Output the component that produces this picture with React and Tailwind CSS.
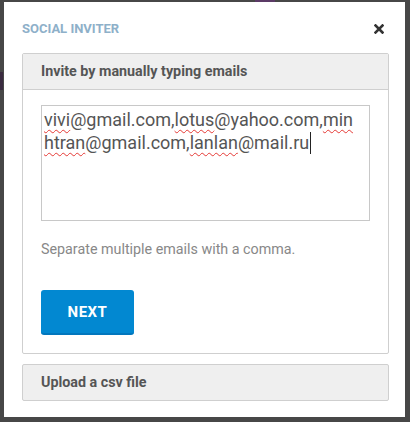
import { useState } from 'react'

const Misspelled = ({ children }) => (
  <span className="underline decoration-wavy decoration-[#e53935] decoration-1 underline-offset-[3px]">{children}</span>
)

export default function App() {
  const [open] = useState(true)
  if (!open) return null

  return (
    <div
      className="w-[410px] h-[422px] bg-[#474747] pt-[2px] pl-[4px] pr-[5px] pb-[5px] relative"
      style={{ fontFamily: 'Roboto, "Liberation Sans", sans-serif' }}
    >
      {/* backdrop bits peeking from behind */}
      <div className="absolute left-[255px] top-0 w-[20px] h-[2px] bg-[#5b3a66]" />
      <div className="absolute left-0 top-[72px] w-[3px] h-[18px] bg-[#3a2b40]" />

      <div className="bg-white h-full flex flex-col">
        {/* Title */}
        <div className="h-[51px] flex items-center justify-between pl-[18px] pr-[21px]">
          <h2 className="text-[13px] font-bold text-[#8eb0c9] uppercase mt-[2px]">Social inviter</h2>
          <button className="mt-[2px]">
            <svg width="10" height="10" viewBox="0 0 10 10">
              <path d="M1.5 1.5 L8.5 8.5 M8.5 1.5 L1.5 8.5" stroke="#333" strokeWidth="2.6" strokeLinecap="square" />
            </svg>
          </button>
        </div>

        {/* Manual entry */}
        <div className="ml-[18px] mr-[16px] border border-[#cfcfcf] rounded-[2px]">
          <div className="h-[36px] bg-[#efefef] border-b border-[#cfcfcf] flex items-center px-[18px]">
            <span className="text-[14.3px] font-bold text-[#555]">Invite by manually typing emails</span>
          </div>
          <div className="px-[18px] pt-[15px] pb-[18px]">
            <div className="h-[116px] border border-[#c8c8c8] px-[2px] pt-[2px] text-[18px] leading-[23px] text-[#555]">
              <div>
                <Misspelled>vivi</Misspelled>@gmail.com,<Misspelled>lotus</Misspelled>@yahoo.com,<Misspelled>min</Misspelled>
              </div>
              <div className="flex items-center">
                <span>
                  <Misspelled>htran</Misspelled>@gmail.com,<Misspelled>lanlan</Misspelled>@mail.ru
                </span>
                <span className="inline-block w-px h-[22px] bg-[#222] ml-px" />
              </div>
            </div>
            <p className="mt-[18px] text-[14.3px] text-[#888]">Separate multiple emails with a comma.</p>
            <button className="mt-[30px] w-[93px] h-[45px] bg-[#0288d1] border-b-2 border-[#0277bd] rounded-[3px] text-white text-[15px] font-bold tracking-[0.5px]">
              NEXT
            </button>
          </div>
        </div>

        {/* CSV upload */}
        <div className="mt-[10px] ml-[18px] mr-[16px] h-[37px] bg-[#efefef] border border-[#cfcfcf] rounded-[2px] flex items-center px-[18px]">
          <span className="text-[14.3px] font-bold text-[#555]">Upload a csv file</span>
        </div>
      </div>
    </div>
  )
}
